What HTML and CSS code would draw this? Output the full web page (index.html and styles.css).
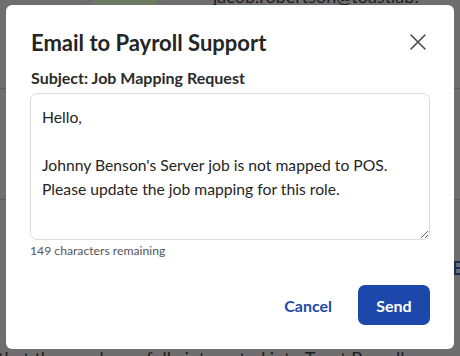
FILE: index.html
```html
<!DOCTYPE html>
<html>
<head>
<meta charset="utf-8">
<link rel="stylesheet" href="styles.css">
</head>
<body>
<div class="page">
  <div class="bg-block"></div>
  <div class="bg-toptext">jacob.robertson@toastlab.</div>
  <div class="bg-line bg-line-1"></div>
  <div class="bg-line bg-line-2"></div>
  <div class="bg-side">Em</div>
  <div class="bg-bottomtext">that the employee fully integrated into Toast Payroll</div>
</div>
<div class="modal">
  <div class="modal-header">
    <h1 class="modal-title">Email to Payroll Support</h1>
    <button class="close-btn" aria-label="Close">
      <svg width="18" height="18" viewBox="0 0 18 18"><path d="M2 2 L16 16 M16 2 L2 16" stroke="#4a4a4a" stroke-width="1.6" fill="none" stroke-linecap="round"/></svg>
    </button>
  </div>
  <div class="subject">Subject: Job Mapping Request</div>
  <textarea class="message">Hello,

Johnny Benson's Server job is not mapped to POS.
Please update the job mapping for this role.</textarea>
  <div class="remaining">149 characters remaining</div>
  <div class="actions">
    <button class="btn-cancel">Cancel</button>
    <button class="btn-send">Send</button>
  </div>
</div>
</body>
</html>
```
FILE: styles.css
```css
html, body {
  margin: 0;
  padding: 0;
}
body {
  width: 460px;
  height: 356px;
  overflow: hidden;
  background: #6e6e6e;
  font-family: "Lato", "Liberation Sans", sans-serif;
  position: relative;
}
.page {
  position: absolute;
  inset: 0;
}
.bg-block {
  position: absolute;
  left: 93px;
  top: 0;
  width: 65px;
  height: 6px;
  background: #6b7a5f;
}
.bg-toptext {
  position: absolute;
  left: 213px;
  top: -15px;
  font-size: 18px;
  color: #1e1e1e;
  white-space: nowrap;
}
.bg-line {
  position: absolute;
  left: 0;
  right: 0;
  height: 1px;
  background: #5c5c5c;
}
.bg-line-1 { top: 88px; }
.bg-line-2 { top: 199px; }
.bg-side {
  position: absolute;
  left: 452px;
  top: 257px;
  font-size: 18px;
  font-weight: 700;
  color: #1a2a55;
}
.bg-bottomtext {
  position: absolute;
  left: -2px;
  top: 347px;
  font-size: 18px;
  color: #1e1e1e;
  white-space: nowrap;
}
.modal {
  position: absolute;
  left: 6px;
  top: 5px;
  width: 448px;
  height: 344px;
  box-sizing: border-box;
  background: #fff;
  border-radius: 6px;
  padding: 20px 24px 0 24px;
  display: flex;
  flex-direction: column;
  color: #252525;
}
.modal-header {
  display: flex;
  align-items: center;
  justify-content: space-between;
  height: 34px;
}
.modal-title {
  margin: 0 0 0 1px;
  font-size: 22px;
  font-weight: 700;
  color: #252525;
}
.close-btn {
  border: 0;
  background: none;
  padding: 0;
  margin-right: 3px;
  width: 18px;
  height: 18px;
  display: flex;
}
.subject {
  margin-top: 9px;
  margin-left: 1px;
  font-size: 16px;
  font-weight: 700;
  color: #2b2b2b;
  line-height: 20px;
}
.message {
  margin-top: 5px;
  width: 400px;
  height: 147px;
  box-sizing: border-box;
  border: 1px solid #dcdcdc;
  border-radius: 7px;
  padding: 11px 11px;
  font-family: "Lato", "Liberation Sans", sans-serif;
  font-size: 15.7px;
  line-height: 24px;
  color: #252525;
  resize: vertical;
  outline: none;
}
.remaining {
  margin-top: 3px;
  font-size: 12.2px;
  color: #555;
  line-height: 16px;
}
.actions {
  margin-top: 26px;
  display: flex;
  justify-content: flex-end;
  align-items: center;
  gap: 26px;
}
.btn-cancel {
  border: 0;
  background: none;
  padding: 0;
  font-family: "Lato", "Liberation Sans", sans-serif;
  font-size: 16px;
  font-weight: 700;
  color: #1f4aa6;
}
.btn-send {
  width: 72px;
  height: 40px;
  border: 0;
  border-radius: 7px;
  background: #1c48ab;
  color: #fff;
  font-family: "Lato", "Liberation Sans", sans-serif;
  font-size: 16px;
  font-weight: 700;
}
```
